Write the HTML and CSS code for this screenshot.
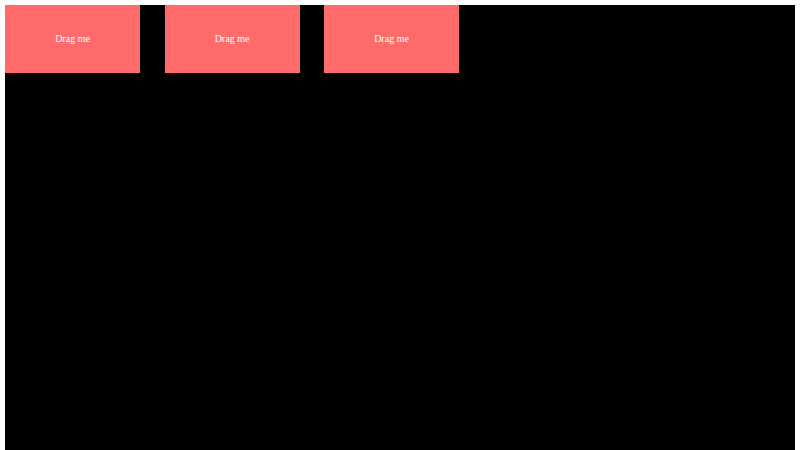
FILE: index.html
```html
<!DOCTYPE html>
<html lang="en">
<head>
  <meta charset="UTF-8">
  <meta name="viewport" content="width=device-width, initial-scale=1.0">
  <title>Drag</title>
  <link rel="stylesheet" href="styles.css">
</head>
<body>
  <div class="board">
    <div class="item" draggable="true">Drag me</div>
    <div class="item" draggable="true">Drag me</div>
    <div class="item" draggable="true">Drag me</div>
  </div>
</body>
</html>
```

FILE: styles.css
```css
body {
  margin: 5px;
  background-color: #fff;
  font-family: "Liberation Serif", serif;
}
.board {
  display: flex;
  align-items: flex-start;
  gap: 24.5px;
  height: 460px;
  background-color: #000;
}
.item {
  width: 135px;
  height: 68px;
  box-sizing: border-box;
  padding-bottom: 2px;
  display: flex;
  align-items: center;
  justify-content: center;
  background-color: #ff6b6b;
  color: #fff;
  font-size: 10px;
  cursor: move;
}
```
